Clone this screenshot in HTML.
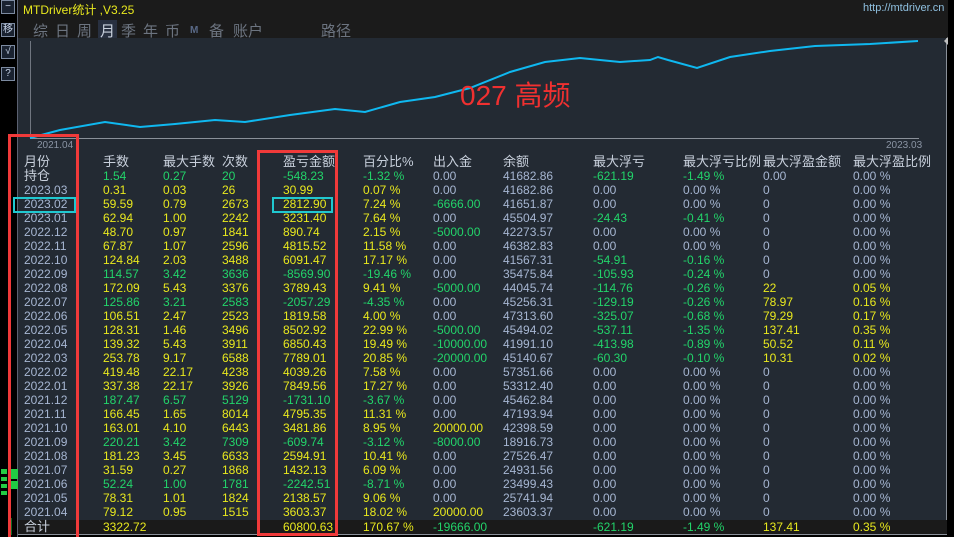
<!DOCTYPE html>
<html><head><meta charset="utf-8"><style>
*{margin:0;padding:0;box-sizing:border-box}
body{width:954px;height:537px;background:#000;position:relative;overflow:hidden;font-family:"Liberation Sans","Noto Sans CJK SC",sans-serif;font-size:12px}
.a{position:absolute}
.top{left:18px;top:0;width:930px;height:38px;background:#1b1b1b}
.panel{left:18px;top:38px;width:929px;height:497px;background:#232a33;border-right:1px solid #8a9099;border-bottom:1px solid #8a9099}
.btn{left:1px;width:14px;height:14px;border:1px solid #7c8aa0;background:#1a2230;color:#c8d4e8;font-size:10px;line-height:12px;text-align:center}
.r{position:absolute;left:0;width:948px;height:14px;line-height:14px}
.r span{position:absolute;white-space:nowrap}
.c0{left:24px}.c1{left:103px}.c2{left:163px}.c3{left:222px}.c4{left:283px}.c5{left:363px}.c6{left:433px}.c7{left:503px}.c8{left:593px}.c9{left:683px}.c10{left:763px}.c11{left:853px}
.r .y{color:#e8e81e}.r .g{color:#22d46a}.r .b{color:#a6b6d2}.r .m{color:#a6b6d2}
.r .hd{color:#c8d0dc;font-size:13px}
.tab{top:20px;color:#6c7480;font-size:15px}
</style></head><body>
<div class="a top"></div>
<div class="a" style="left:17px;top:0;width:1px;height:537px;background:#5a6070"></div>
<div class="a btn" style="top:0">−</div>
<div class="a btn" style="top:23px">移</div>
<div class="a btn" style="top:45px">√</div>
<div class="a btn" style="top:67px">?</div>
<div class="a" style="left:23px;top:1px;color:#e8e81e;font-size:12px">MTDriver统计 ,V3.25</div>
<div class="a" style="left:863px;top:2px;color:#8fc0e0;font-size:11px">http://mtdriver.cn</div>
<div class="a tab" style="left:33px">综</div><div class="a tab" style="left:55px">日</div><div class="a tab" style="left:77px">周</div>
<div class="a tab" style="left:98px;background:#283040;color:#c8d0dc;padding:0 2px">月</div>
<div class="a tab" style="left:121px">季</div><div class="a tab" style="left:143px">年</div><div class="a tab" style="left:165px">币</div>
<div class="a tab" style="left:190px;font-size:10px;top:25px;color:#5a6a88;font-weight:bold">M</div>
<div class="a tab" style="left:209px">备</div><div class="a tab" style="left:233px">账户</div><div class="a tab" style="left:321px">路径</div>
<div class="a panel"></div>
<svg class="a" style="left:0;top:0" width="954" height="537">
<line x1="30.5" y1="41" x2="30.5" y2="138" stroke="#707680"/>
<line x1="30" y1="138.5" x2="919" y2="138.5" stroke="#8a9099"/>
<polyline fill="none" stroke="#0fb8f0" stroke-width="2" points="30,138 60,130 105,122 140,127 175,124 215,120 245,122 290,115 335,109 365,112 400,102 435,97 470,88 510,72 545,62 580,58 620,62 650,60 658,57 668,60 697,68 730,57 770,51 815,46 870,44 918,41"/>
<polygon points="944,41 948,37 948,45" fill="#c0c0c0"/>
<rect x="1" y="469" width="6" height="5" fill="#22cc44"/><rect x="9" y="469" width="9" height="10" fill="#22cc44"/>
<rect x="1" y="477" width="6" height="4" fill="#22cc44"/><rect x="9" y="481" width="9" height="8" fill="#22cc44"/>
<rect x="1" y="484" width="6" height="4" fill="#22cc44"/><rect x="1" y="491" width="6" height="4" fill="#22cc44"/>
<rect x="10" y="518" width="1.5" height="17" fill="#22cc44"/>
</svg>
<div class="a" style="left:37px;top:140px;color:#8a94a4;font-size:10px">2021.04</div>
<div class="a" style="left:886px;top:140px;color:#8a94a4;font-size:10px">2023.03</div>
<div class="a" style="left:460px;top:74px;color:#f03030;font-size:28px">027 高频</div>
<div class="a" style="left:18px;top:520px;width:929px;height:14px;background:#1a1a1a"></div>

<div class="r" style="top:155px"><span class="c0 hd">月份</span><span class="c1 hd">手数</span><span class="c2 hd">最大手数</span><span class="c3 hd">次数</span><span class="c4 hd">盈亏金额</span><span class="c5 hd">百分比%</span><span class="c6 hd">出入金</span><span class="c7 hd">余额</span><span class="c8 hd">最大浮亏</span><span class="c9 hd">最大浮亏比例</span><span class="c10 hd">最大浮盈金额</span><span class="c11 hd">最大浮盈比例</span></div>
<div class="r" style="top:169px"><span class="c0 hd">持仓</span><span class="c1 g">1.54</span><span class="c2 g">0.27</span><span class="c3 g">20</span><span class="c4 g">-548.23</span><span class="c5 g">-1.32 %</span><span class="c6 b">0.00</span><span class="c7 b">41682.86</span><span class="c8 g">-621.19</span><span class="c9 g">-1.49 %</span><span class="c10 b">0.00</span><span class="c11 b">0.00 %</span></div>
<div class="r" style="top:183px"><span class="c0 m">2023.03</span><span class="c1 y">0.31</span><span class="c2 y">0.03</span><span class="c3 y">26</span><span class="c4 y">30.99</span><span class="c5 y">0.07 %</span><span class="c6 b">0.00</span><span class="c7 b">41682.86</span><span class="c8 b">0.00</span><span class="c9 b">0.00 %</span><span class="c10 b">0</span><span class="c11 b">0.00 %</span></div>
<div class="r" style="top:197px"><span class="c0 m">2023.02</span><span class="c1 y">59.59</span><span class="c2 y">0.79</span><span class="c3 y">2673</span><span class="c4 y">2812.90</span><span class="c5 y">7.24 %</span><span class="c6 g">-6666.00</span><span class="c7 b">41651.87</span><span class="c8 b">0.00</span><span class="c9 b">0.00 %</span><span class="c10 b">0</span><span class="c11 b">0.00 %</span></div>
<div class="r" style="top:211px"><span class="c0 m">2023.01</span><span class="c1 y">62.94</span><span class="c2 y">1.00</span><span class="c3 y">2242</span><span class="c4 y">3231.40</span><span class="c5 y">7.64 %</span><span class="c6 b">0.00</span><span class="c7 b">45504.97</span><span class="c8 g">-24.43</span><span class="c9 g">-0.41 %</span><span class="c10 b">0</span><span class="c11 b">0.00 %</span></div>
<div class="r" style="top:225px"><span class="c0 m">2022.12</span><span class="c1 y">48.70</span><span class="c2 y">0.97</span><span class="c3 y">1841</span><span class="c4 y">890.74</span><span class="c5 y">2.15 %</span><span class="c6 g">-5000.00</span><span class="c7 b">42273.57</span><span class="c8 b">0.00</span><span class="c9 b">0.00 %</span><span class="c10 b">0</span><span class="c11 b">0.00 %</span></div>
<div class="r" style="top:239px"><span class="c0 m">2022.11</span><span class="c1 y">67.87</span><span class="c2 y">1.07</span><span class="c3 y">2596</span><span class="c4 y">4815.52</span><span class="c5 y">11.58 %</span><span class="c6 b">0.00</span><span class="c7 b">46382.83</span><span class="c8 b">0.00</span><span class="c9 b">0.00 %</span><span class="c10 b">0</span><span class="c11 b">0.00 %</span></div>
<div class="r" style="top:253px"><span class="c0 m">2022.10</span><span class="c1 y">124.84</span><span class="c2 y">2.03</span><span class="c3 y">3488</span><span class="c4 y">6091.47</span><span class="c5 y">17.17 %</span><span class="c6 b">0.00</span><span class="c7 b">41567.31</span><span class="c8 g">-54.91</span><span class="c9 g">-0.16 %</span><span class="c10 b">0</span><span class="c11 b">0.00 %</span></div>
<div class="r" style="top:267px"><span class="c0 m">2022.09</span><span class="c1 g">114.57</span><span class="c2 g">3.42</span><span class="c3 g">3636</span><span class="c4 g">-8569.90</span><span class="c5 g">-19.46 %</span><span class="c6 b">0.00</span><span class="c7 b">35475.84</span><span class="c8 g">-105.93</span><span class="c9 g">-0.24 %</span><span class="c10 b">0</span><span class="c11 b">0.00 %</span></div>
<div class="r" style="top:281px"><span class="c0 m">2022.08</span><span class="c1 y">172.09</span><span class="c2 y">5.43</span><span class="c3 y">3376</span><span class="c4 y">3789.43</span><span class="c5 y">9.41 %</span><span class="c6 g">-5000.00</span><span class="c7 b">44045.74</span><span class="c8 g">-114.76</span><span class="c9 g">-0.26 %</span><span class="c10 y">22</span><span class="c11 y">0.05 %</span></div>
<div class="r" style="top:295px"><span class="c0 m">2022.07</span><span class="c1 g">125.86</span><span class="c2 g">3.21</span><span class="c3 g">2583</span><span class="c4 g">-2057.29</span><span class="c5 g">-4.35 %</span><span class="c6 b">0.00</span><span class="c7 b">45256.31</span><span class="c8 g">-129.19</span><span class="c9 g">-0.26 %</span><span class="c10 y">78.97</span><span class="c11 y">0.16 %</span></div>
<div class="r" style="top:309px"><span class="c0 m">2022.06</span><span class="c1 y">106.51</span><span class="c2 y">2.47</span><span class="c3 y">2523</span><span class="c4 y">1819.58</span><span class="c5 y">4.00 %</span><span class="c6 b">0.00</span><span class="c7 b">47313.60</span><span class="c8 g">-325.07</span><span class="c9 g">-0.68 %</span><span class="c10 y">79.29</span><span class="c11 y">0.17 %</span></div>
<div class="r" style="top:323px"><span class="c0 m">2022.05</span><span class="c1 y">128.31</span><span class="c2 y">1.46</span><span class="c3 y">3496</span><span class="c4 y">8502.92</span><span class="c5 y">22.99 %</span><span class="c6 g">-5000.00</span><span class="c7 b">45494.02</span><span class="c8 g">-537.11</span><span class="c9 g">-1.35 %</span><span class="c10 y">137.41</span><span class="c11 y">0.35 %</span></div>
<div class="r" style="top:337px"><span class="c0 m">2022.04</span><span class="c1 y">139.32</span><span class="c2 y">5.43</span><span class="c3 y">3911</span><span class="c4 y">6850.43</span><span class="c5 y">19.49 %</span><span class="c6 g">-10000.00</span><span class="c7 b">41991.10</span><span class="c8 g">-413.98</span><span class="c9 g">-0.89 %</span><span class="c10 y">50.52</span><span class="c11 y">0.11 %</span></div>
<div class="r" style="top:351px"><span class="c0 m">2022.03</span><span class="c1 y">253.78</span><span class="c2 y">9.17</span><span class="c3 y">6588</span><span class="c4 y">7789.01</span><span class="c5 y">20.85 %</span><span class="c6 g">-20000.00</span><span class="c7 b">45140.67</span><span class="c8 g">-60.30</span><span class="c9 g">-0.10 %</span><span class="c10 y">10.31</span><span class="c11 y">0.02 %</span></div>
<div class="r" style="top:365px"><span class="c0 m">2022.02</span><span class="c1 y">419.48</span><span class="c2 y">22.17</span><span class="c3 y">4238</span><span class="c4 y">4039.26</span><span class="c5 y">7.58 %</span><span class="c6 b">0.00</span><span class="c7 b">57351.66</span><span class="c8 b">0.00</span><span class="c9 b">0.00 %</span><span class="c10 b">0</span><span class="c11 b">0.00 %</span></div>
<div class="r" style="top:379px"><span class="c0 m">2022.01</span><span class="c1 y">337.38</span><span class="c2 y">22.17</span><span class="c3 y">3926</span><span class="c4 y">7849.56</span><span class="c5 y">17.27 %</span><span class="c6 b">0.00</span><span class="c7 b">53312.40</span><span class="c8 b">0.00</span><span class="c9 b">0.00 %</span><span class="c10 b">0</span><span class="c11 b">0.00 %</span></div>
<div class="r" style="top:393px"><span class="c0 m">2021.12</span><span class="c1 g">187.47</span><span class="c2 g">6.57</span><span class="c3 g">5129</span><span class="c4 g">-1731.10</span><span class="c5 g">-3.67 %</span><span class="c6 b">0.00</span><span class="c7 b">45462.84</span><span class="c8 b">0.00</span><span class="c9 b">0.00 %</span><span class="c10 b">0</span><span class="c11 b">0.00 %</span></div>
<div class="r" style="top:407px"><span class="c0 m">2021.11</span><span class="c1 y">166.45</span><span class="c2 y">1.65</span><span class="c3 y">8014</span><span class="c4 y">4795.35</span><span class="c5 y">11.31 %</span><span class="c6 b">0.00</span><span class="c7 b">47193.94</span><span class="c8 b">0.00</span><span class="c9 b">0.00 %</span><span class="c10 b">0</span><span class="c11 b">0.00 %</span></div>
<div class="r" style="top:421px"><span class="c0 m">2021.10</span><span class="c1 y">163.01</span><span class="c2 y">4.10</span><span class="c3 y">6443</span><span class="c4 y">3481.86</span><span class="c5 y">8.95 %</span><span class="c6 y">20000.00</span><span class="c7 b">42398.59</span><span class="c8 b">0.00</span><span class="c9 b">0.00 %</span><span class="c10 b">0</span><span class="c11 b">0.00 %</span></div>
<div class="r" style="top:435px"><span class="c0 m">2021.09</span><span class="c1 g">220.21</span><span class="c2 g">3.42</span><span class="c3 g">7309</span><span class="c4 g">-609.74</span><span class="c5 g">-3.12 %</span><span class="c6 g">-8000.00</span><span class="c7 b">18916.73</span><span class="c8 b">0.00</span><span class="c9 b">0.00 %</span><span class="c10 b">0</span><span class="c11 b">0.00 %</span></div>
<div class="r" style="top:449px"><span class="c0 m">2021.08</span><span class="c1 y">181.23</span><span class="c2 y">3.45</span><span class="c3 y">6633</span><span class="c4 y">2594.91</span><span class="c5 y">10.41 %</span><span class="c6 b">0.00</span><span class="c7 b">27526.47</span><span class="c8 b">0.00</span><span class="c9 b">0.00 %</span><span class="c10 b">0</span><span class="c11 b">0.00 %</span></div>
<div class="r" style="top:463px"><span class="c0 m">2021.07</span><span class="c1 y">31.59</span><span class="c2 y">0.27</span><span class="c3 y">1868</span><span class="c4 y">1432.13</span><span class="c5 y">6.09 %</span><span class="c6 b">0.00</span><span class="c7 b">24931.56</span><span class="c8 b">0.00</span><span class="c9 b">0.00 %</span><span class="c10 b">0</span><span class="c11 b">0.00 %</span></div>
<div class="r" style="top:477px"><span class="c0 m">2021.06</span><span class="c1 g">52.24</span><span class="c2 g">1.00</span><span class="c3 g">1781</span><span class="c4 g">-2242.51</span><span class="c5 g">-8.71 %</span><span class="c6 b">0.00</span><span class="c7 b">23499.43</span><span class="c8 b">0.00</span><span class="c9 b">0.00 %</span><span class="c10 b">0</span><span class="c11 b">0.00 %</span></div>
<div class="r" style="top:491px"><span class="c0 m">2021.05</span><span class="c1 y">78.31</span><span class="c2 y">1.01</span><span class="c3 y">1824</span><span class="c4 y">2138.57</span><span class="c5 y">9.06 %</span><span class="c6 b">0.00</span><span class="c7 b">25741.94</span><span class="c8 b">0.00</span><span class="c9 b">0.00 %</span><span class="c10 b">0</span><span class="c11 b">0.00 %</span></div>
<div class="r" style="top:505px"><span class="c0 m">2021.04</span><span class="c1 y">79.12</span><span class="c2 y">0.95</span><span class="c3 y">1515</span><span class="c4 y">3603.37</span><span class="c5 y">18.02 %</span><span class="c6 y">20000.00</span><span class="c7 b">23603.37</span><span class="c8 b">0.00</span><span class="c9 b">0.00 %</span><span class="c10 b">0</span><span class="c11 b">0.00 %</span></div>
<div class="r" style="top:520px"><span class="c0 hd">合计</span><span class="c1 y">3322.72</span><span class="c4 y">60800.63</span><span class="c5 y">170.67 %</span><span class="c6 g">-19666.00</span><span class="c8 g">-621.19</span><span class="c9 g">-1.49 %</span><span class="c10 y">137.41</span><span class="c11 y">0.35 %</span></div>

<div class="a" style="left:8px;top:134px;width:71px;height:403px;border:3px solid #f03a3a;border-bottom:none"></div>
<div class="a" style="left:257px;top:150px;width:81px;height:386px;border:3px solid #f03a3a"></div>
<div class="a" style="left:13px;top:197px;width:63px;height:16px;border:2px solid #20c8d0"></div>
<div class="a" style="left:272px;top:197px;width:61px;height:16px;border:2px solid #20c8d0"></div>
</body></html>
